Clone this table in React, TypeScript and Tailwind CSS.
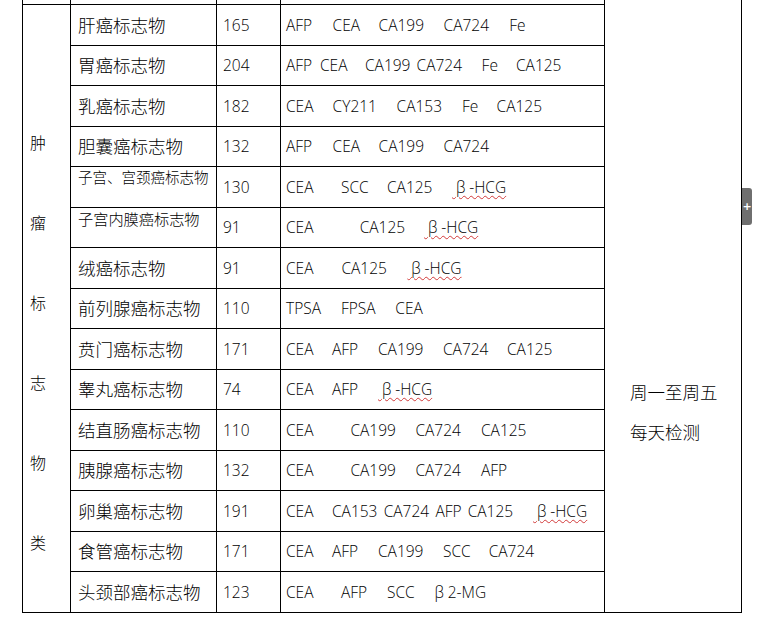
import React from "react";

type Tok = [string, string, ("hcg" | "mg" | "")?];
type Row = { name: string; nameCls?: string; n: string; t: Tok[]; top?: boolean };

const rows: Row[] = [
  { name: "肝癌标志物", n: "165", t: [["AFP", "w-[46.6px]"], ["CEA", "w-[46px]"], ["CA199", "w-[65px]"], ["CA724", "w-[65.7px]"], ["Fe", ""]] },
  { name: "胃癌标志物", n: "204", t: [["AFP", "w-[34px]"], ["CEA", "w-[45px]"], ["CA199", "w-[51.6px]"], ["CA724", "w-[65px]"], ["Fe", "w-[34.4px]"], ["CA125", ""]] },
  { name: "乳癌标志物", n: "182", t: [["CEA", "w-[46.6px]"], ["CY211", "w-[64px]"], ["CA153", "w-[65.4px]"], ["Fe", "w-[34.6px]"], ["CA125", ""]] },
  { name: "胆囊癌标志物", n: "132", t: [["AFP", "w-[46.6px]"], ["CEA", "w-[46px]"], ["CA199", "w-[65px]"], ["CA724", ""]] },
  { name: "子宫、宫颈癌标志物", nameCls: "text-[14.5px]", top: true, n: "130", t: [["CEA", "w-[55px]"], ["SCC", "w-[46px]"], ["CA125", "w-[65px]"], ["", "", "hcg"]] },
  { name: "子宫内膜癌标志物", nameCls: "text-[15.2px]", top: true, n: "91", t: [["CEA", "w-[73.7px]"], ["CA125", "w-[64.4px]"], ["", "", "hcg"]] },
  { name: "绒癌标志物", n: "91", t: [["CEA", "w-[55.4px]"], ["CA125", "w-[66px]"], ["", "", "hcg"]] },
  { name: "前列腺癌标志物", n: "110", t: [["TPSA", "w-[55px]"], ["FPSA", "w-[54.3px]"], ["CEA", ""]] },
  { name: "贲门癌标志物", n: "171", t: [["CEA", "w-[46px]"], ["AFP", "w-[46px]"], ["CA199", "w-[65px]"], ["CA724", "w-[64px]"], ["CA125", ""]] },
  { name: "睾丸癌标志物", n: "74", t: [["CEA", "w-[46px]"], ["AFP", "w-[46px]"], ["", "", "hcg"]] },
  { name: "结直肠癌标志物", n: "110", t: [["CEA", "w-[64.4px]"], ["CA199", "w-[65px]"], ["CA724", "w-[65.6px]"], ["CA125", ""]] },
  { name: "胰腺癌标志物", n: "132", t: [["CEA", "w-[64.4px]"], ["CA199", "w-[65px]"], ["CA724", "w-[65.6px]"], ["AFP", ""]] },
  { name: "卵巢癌标志物", n: "191", t: [["CEA", "w-[46px]"], ["CA153", "w-[51.7px]"], ["CA724", "w-[51.7px]"], ["AFP", "w-[32.3px]"], ["CA125", "w-[65.4px]"], ["", "", "hcg"]] },
  { name: "食管癌标志物", n: "171", t: [["CEA", "w-[46px]"], ["AFP", "w-[46px]"], ["CA199", "w-[65px]"], ["SCC", "w-[45.7px]"], ["CA724", ""]] },
  { name: "头颈部癌标志物", n: "123", t: [["CEA", "w-[55px]"], ["AFP", "w-[46px]"], ["SCC", "w-[43.5px]"], ["", "", "mg"]] },
];

const cell = "border-r border-b border-black";
const latin = "font-['Open_Sans','Noto_Sans_CJK_SC',sans-serif] text-[15.5px] font-light text-black";
const cjk = "font-['Noto_Sans_CJK_SC',sans-serif] text-black";

function Token({ tok }: { tok: Tok }) {
  const [text, cls, kind] = tok;
  if (kind === "hcg") {
    return (
      <span className={"shrink-0 " + cls}>
        <span className="underline decoration-wavy decoration-[#d23a3a] decoration-1 underline-offset-[2px]">
          {"\u2005β\u2005-HCG"}
        </span>
      </span>
    );
  }
  if (kind === "mg") {
    return <span className={"shrink-0 " + cls}>{"\u2005β\u20052-MG"}</span>;
  }
  return <span className={"shrink-0 " + cls}>{text}</span>;
}

export default function App() {
  return (
    <div className="relative w-[759px] h-[625px] bg-white overflow-hidden">
      <div className="ml-[22px] w-fit border-l border-black grid grid-cols-[48px_146px_64px_324px_137px] grid-rows-[5px_repeat(15,40.5px)]">
        {/* cut-off top row */}
        <div className={cell + " col-start-1 row-start-1"} />
        <div className={cell + " col-start-2 row-start-1"} />
        <div className={cell + " col-start-3 row-start-1"} />
        <div className={cell + " col-start-4 row-start-1"} />
        {/* right merged column */}
        <div className={cell + " col-start-5 row-start-1 row-span-16 pl-[25px] pt-[372px]"}>
          <div className={cjk + " text-[17.5px] leading-[40px] font-light"}>周一至周五</div>
          <div className={cjk + " text-[17.5px] leading-[40px] font-light"}>每天检测</div>
        </div>
        {/* left merged column */}
        <div className={cell + " col-start-1 row-start-2 row-span-15 pl-[7px] pt-[97px] flex flex-col"}>
          {"肿瘤标志物类".split("").map((c) => (
            <div key={c} className={cjk + " text-[16px] leading-[80px] font-light"}>
              {c}
            </div>
          ))}
        </div>
        {rows.map((r, i) => (
          <React.Fragment key={i}>
            <div
              className={
                cell +
                " col-start-2 pl-[7px] flex " +
                (r.top ? "items-start pt-[1px]" : "items-center")
              }
            >
              <span className={cjk + " font-light whitespace-nowrap " + (r.nameCls ? r.nameCls + " leading-[18px]" : "text-[17.5px] leading-[24px]")}>
                {r.name}
              </span>
            </div>
            <div className={cell + " col-start-3 pl-[6px] pt-[1px] flex items-center"}>
              <span className={latin}>{r.n}</span>
            </div>
            <div className={cell + " col-start-4 pl-[5px] pt-[1px] flex items-center whitespace-nowrap " + latin}>
              {r.t.map((tk, j) => (
                <Token key={j} tok={tk} />
              ))}
            </div>
          </React.Fragment>
        ))}
      </div>
      {/* side tab */}
      <div className="absolute left-[742px] top-[188px] w-[10px] h-[37px] bg-[#6f6f6f] rounded-r-[3px] flex items-center justify-center">
        <span className="text-white text-[11px] font-bold leading-none font-['DejaVu_Sans',sans-serif]">+</span>
      </div>
    </div>
  );
}
